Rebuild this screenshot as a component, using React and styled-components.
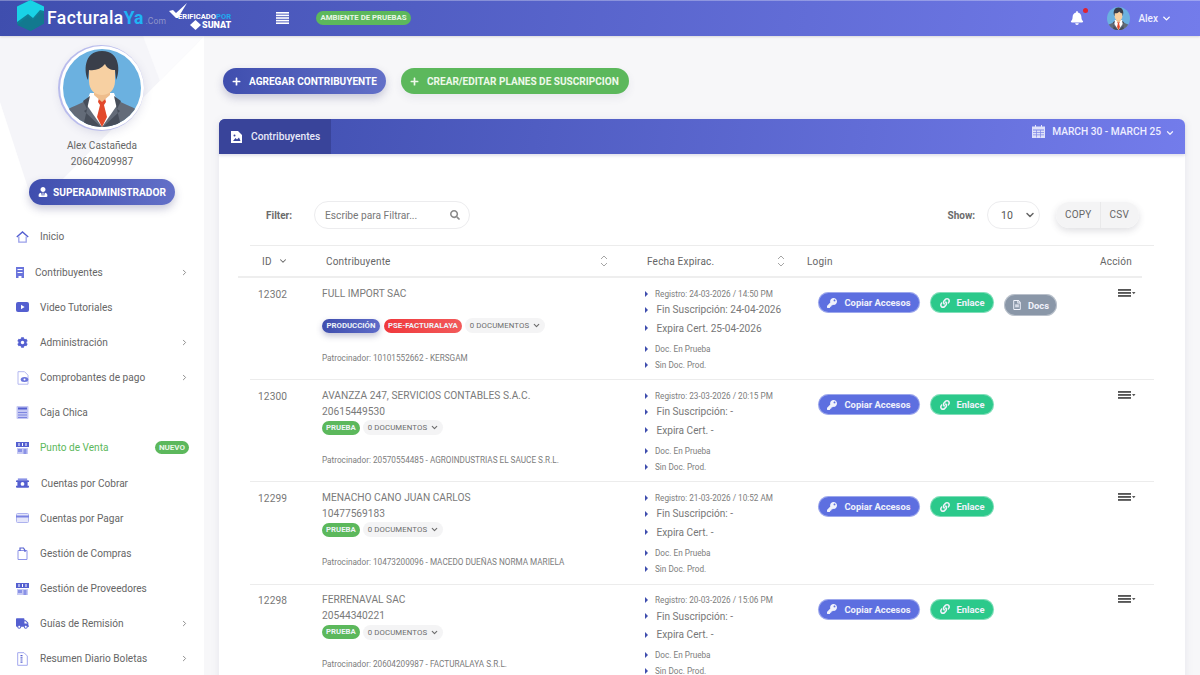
import React from 'react';
import styled, { createGlobalStyle } from 'styled-components';
import { FaBell, FaCog, FaKey, FaLink, FaPlus, FaRegFileAlt, FaSearch, FaTruck, FaUserTie } from 'react-icons/fa';
import { FiChevronDown, FiChevronRight } from 'react-icons/fi';

const GlobalStyle = createGlobalStyle`
  html, body {
    margin: 0;
    height: 100%;
    overflow: hidden;
    background: #f7f7f9;
    font-family: Roboto, "Liberation Sans", sans-serif;
    color: #6f6f6f;
  }
`;

const gradient = 'linear-gradient(100deg, #3f4eae 0%, #737ceb 100%)';

const Page = styled.div`
  width: 1200px;
  height: 675px;
  overflow: hidden;
  display: flex;
  flex-direction: column;
`;

const TopBar = styled.header`
  height: 36px;
  flex: none;
  display: flex;
  align-items: center;
  background: ${gradient};
  box-shadow: inset 0 1px 0 rgba(255, 255, 255, .3), 0 1px 2px rgba(0, 0, 0, .12);
  color: #fff;
  position: relative;
  z-index: 2;
`;

const LogoBox = styled.div`
  display: flex;
  align-items: center;
  margin-left: 17px;
  width: 152px;
  flex: none;
`;

const LogoText = styled.span`
  font-size: 17.5px;
  font-weight: 500;
  margin-left: 3px;
  letter-spacing: .45px;
  white-space: nowrap;
  b { font-weight: 700; color: #1fb4f5; letter-spacing: 0; }
  small { font-size: 8.5px; font-weight: 400; color: #8f95c9; letter-spacing: .2px; margin-left: 2px; }
`;

const Verified = styled.div`
  position: relative;
  width: 62px;
  height: 32px;
  flex: none;
  margin-right: 45px;
  line-height: 1;
`;

const VerifiedCheck = styled.svg`
  position: absolute;
  left: 0;
  top: 1px;
`;

const VerifiedLine = styled.span`
  position: absolute;
  left: 9px;
  top: 11px;
  font-size: 7.6px;
  font-weight: 700;
  white-space: nowrap;
  b { color: #22a9ee; font-weight: 700; }
`;

const SunatLine = styled.span`
  position: absolute;
  left: 21px;
  top: 18px;
  font-size: 9px;
  font-weight: 900;
  display: flex;
  align-items: center;
  gap: 1px;
`;

const EnvBadge = styled.span`
  margin-left: 27px;
  width: 95px;
  height: 14px;
  border-radius: 7px;
  background: #5cb85c;
  font-size: 7.8px;
  font-weight: 700;
  line-height: 14px;
  text-align: center;
  color: #e8f6e6;
`;

const TopRight = styled.div`
  margin-left: auto;
  display: flex;
  align-items: center;
  padding-right: 28px;
`;

const BellBox = styled.span`
  position: relative;
  display: flex;
  font-size: 14px;
  margin-right: 23px;
  &::after {
    content: '';
    position: absolute;
    top: -3px;
    right: -4px;
    width: 5px;
    height: 5px;
    border-radius: 50%;
    background: #e0212f;
  }
`;

const TopUser = styled.span`
  font-size: 10px;
  font-weight: 500;
  margin-left: 8px;
  margin-right: 3px;
  color: #eef;
`;

const Body = styled.div`
  flex: 1;
  display: flex;
  min-height: 0;
`;

const Sidebar = styled.aside`
  width: 204px;
  flex: none;
  background: #fff;
  position: relative;
  overflow: hidden;
  display: flex;
  flex-direction: column;
  align-items: center;
  padding-top: 10px;
  box-sizing: border-box;
`;

const SideDecor = styled.svg`
  position: absolute;
  left: 0;
  top: 0;
`;

const AvatarRing = styled.div`
  position: relative;
  flex: none;
  width: 84px;
  height: 84px;
  border-radius: 50%;
  padding: 3px;
  box-sizing: border-box;
  background: #fff;
  box-shadow: -1px 0 0 1px #b9bcec, 0 3px 10px rgba(90, 90, 140, .16);
`;

const UserName = styled.div`
  position: relative;
  flex: none;
  margin-top: ${p => p.$mt}px;
  font-size: 10.1px;
  line-height: 16px;
  color: #666;
`;

const UserRole = styled.button`
  position: relative;
  flex: none;
  margin-top: 9px;
  width: 146px;
  height: 26px;
  border: 0;
  border-radius: 13px;
  background: linear-gradient(90deg, #3f4eae, #6370c8);
  box-shadow: 0 4px 8px rgba(60, 60, 120, .28);
  color: #fff;
  font: 700 10.15px Roboto, sans-serif;
  display: flex;
  align-items: center;
  justify-content: center;
  gap: 5px;
`;

const Menu = styled.nav`
  width: 100%;
  flex: none;
  margin-top: 14.4px;
  position: relative;
`;

const MenuItem = styled.div`
  height: 35.17px;
  display: flex;
  align-items: center;
  padding-left: 16px;
  padding-right: 15px;
  font-size: 10.1px;
  color: ${p => (p.$green ? '#5cb85c' : '#666')};
`;

const MenuIcon = styled.span`
  width: 13px;
  flex: none;
  display: flex;
  justify-content: ${p => (p.$start ? 'flex-start' : 'center')};
  color: #545fd0;
  font-size: 13px;
`;

const MenuLabel = styled.span`
  margin-left: ${p => p.$indent}px;
  white-space: nowrap;
`;

const MenuArrow = styled(FiChevronRight)`
  margin-left: auto;
  font-size: 9px;
  stroke-width: 2.5;
  color: #888;
`;

const NewBadge = styled.span`
  margin-left: auto;
  width: 34px;
  height: 13px;
  border-radius: 7px;
  background: #5cb85c;
  color: #eaf7e8;
  font-size: 8px;
  font-weight: 700;
  line-height: 13px;
  text-align: center;
`;

const Main = styled.main`
  flex: 1;
  min-width: 0;
  padding: 32px 15px 0;
`;

const ActionBar = styled.div`
  display: flex;
  gap: 15px;
  padding-left: 4px;
`;

const AddButton = styled.button`
  height: 26px;
  width: ${p => p.$w}px;
  border: 0;
  border-radius: 13px;
  background: ${p => (p.$green ? '#5cb85c' : 'linear-gradient(90deg, #3f4eae, #6370c8)')};
  box-shadow: 0 4px 8px rgba(60, 60, 120, ${p => (p.$green ? '.08' : '.25')});
  color: ${p => (p.$green ? '#eef8ea' : '#fff')};
  font: 700 10.05px Roboto, sans-serif;
  display: flex;
  align-items: center;
  gap: 8px;
  padding: 0 0 0 9px;
  white-space: nowrap;
`;

const Card = styled.section`
  margin-top: 25px;
  width: 966px;
  height: 600px;
  background: #fff;
  border-radius: 6px 6px 0 0;
  box-shadow: 0 1px 8px rgba(80, 80, 120, .1);
`;

const CardHead = styled.div`
  height: 35px;
  display: flex;
  justify-content: space-between;
  background: ${gradient};
  border-radius: 6px 6px 0 0;
  color: #fff;
  box-shadow: 0 2px 3px rgba(60, 60, 120, .15);
`;

const CardTab = styled.div`
  width: 112px;
  display: flex;
  align-items: center;
  gap: 9px;
  padding-left: 12px;
  box-sizing: border-box;
  background: #39449a;
  border-radius: 6px 0 0 0;
  font-size: 10.2px;
  font-weight: 500;
  color: #e8e9f8;
`;

const DateRange = styled.div`
  display: flex;
  align-items: flex-start;
  padding: 6px 10px 0 0;
  gap: 7px;
  font-size: 10.2px;
  font-weight: 500;
  line-height: 14px;
  color: #eef;
`;

const DateChevron = styled(FiChevronDown)`
  margin: 3px 0 0 -3px;
  stroke-width: 3;
`;

const CardBody = styled.div`
  padding: 47px 31px 0;
`;

const FilterRow = styled.div`
  display: flex;
  align-items: center;
  height: 28px;
  padding: 0 15px 0 16px;
  margin-bottom: 16px;
`;

const FieldLabel = styled.span`
  font-size: 10px;
  font-weight: 700;
  color: #6b6b6b;
  margin-right: ${p => p.$gap}px;
`;

const SearchBox = styled.div`
  width: 156px;
  height: 28px;
  box-sizing: border-box;
  border: 1px solid #ececee;
  border-radius: 14px;
  display: flex;
  align-items: center;
  justify-content: space-between;
  padding: 0 9px 0 10px;
  font-size: 10.2px;
  color: #777;
`;

const ShowSelect = styled.div`
  margin-left: auto;
  display: flex;
  align-items: center;
`;

const SelectBox = styled.div`
  width: 53px;
  height: 28px;
  box-sizing: border-box;
  border: 1px solid #ececee;
  border-radius: 14px;
  display: flex;
  align-items: center;
  justify-content: space-between;
  padding: 0 3px 0 13px;
  font-size: 10.5px;
  color: #555;
`;

const ExportGroup = styled.div`
  margin-left: 16px;
  display: flex;
  height: 26px;
  border-radius: 13px;
  overflow: hidden;
  box-shadow: 0 3px 7px rgba(60, 60, 80, .16);
`;

const ExportButton = styled.span`
  background: #f4f4f5;
  padding: 0 ${p => p.$pr}px 0 ${p => p.$pl}px;
  font-size: 10px;
  line-height: 25px;
  letter-spacing: .2px;
  color: #666;
  & + & { border-left: 1px solid #e9e9ea; }
`;

const TableHead = styled.div`
  border-top: 1px solid #ececec;
`;

const HeadRow = styled.div`
  width: 904px;
  height: 32px;
  margin-left: -12px;
  box-sizing: border-box;
  border-bottom: 2px solid #eeeeee;
  display: grid;
  grid-template-columns: 88px 321px 160px 293px 42px;
  align-items: center;
  font-size: 10px;
  letter-spacing: .2px;
  color: #666;
`;

const HeadCell = styled.div`
  display: flex;
  align-items: center;
  justify-content: space-between;
  padding-left: ${p => p.$pl || 0}px;
  padding-right: ${p => p.$pr || 0}px;
`;

const Row = styled.div`
  height: 102.2px;
  box-sizing: border-box;
  border-bottom: 1px solid #ececec;
  display: grid;
  grid-template-columns: 72px 321px 175px 300px 36px;
  padding-top: 7.5px;
  overflow: hidden;
`;

const IdCell = styled.div`
  padding-left: 8px;
  font-size: 10.2px;
  line-height: 17px;
  letter-spacing: .1px;
  color: #777;
`;

const TextLine = styled.div`
  height: 16px;
  font-size: 10.2px;
  line-height: 16px;
  color: #7a7a7a;
  white-space: nowrap;
`;

const BadgeRow = styled.div`
  display: flex;
  align-items: center;
  gap: 3px;
  height: 16px;
`;

const StateBadge = styled.span`
  height: 14px;
  padding: 0 ${p => p.$pad || 4}px;
  margin-right: ${p => p.$mr || 0}px;
  border-radius: 7px;
  background: ${p => p.$bg};
  box-shadow: ${p => (p.$raised ? '0 3px 6px rgba(60, 60, 120, .3)' : 'none')};
  color: #eef3f8;
  font-size: 7.8px;
  font-weight: 700;
  line-height: 14px;
`;

const DocsChip = styled.span`
  height: 15px;
  width: 80px;
  box-sizing: border-box;
  padding-left: 5px;
  border-radius: 8px;
  background: #f4f4f5;
  color: #6c6c6c;
  font-size: 7.8px;
  letter-spacing: .1px;
  display: flex;
  align-items: center;
  gap: 3px;
  svg { stroke-width: 3; }
`;

const Sponsor = styled.div`
  margin-top: 16px;
  font-size: 8.2px;
  line-height: 16px;
  color: #7d7d7d;
  white-space: nowrap;
`;

const DateLine = styled.div`
  height: ${p => p.$h}px;
  display: flex;
  align-items: center;
  font-size: ${p => (p.$big ? '10.1px' : '8.2px')};
  color: ${p => (p.$big ? '#777' : '#7d7d7d')};
  white-space: nowrap;
  &::before {
    content: '';
    width: 0;
    height: 0;
    margin-right: ${p => (p.$big ? '8.5px' : '7px')};
    margin-left: 2px;
    border-left: 3px solid #3f4eae;
    border-top: 3px solid transparent;
    border-bottom: 3px solid transparent;
  }
`;

const LoginCell = styled.div`
  display: flex;
  gap: 10px;
  align-items: flex-start;
  padding-top: 6.5px;
`;

const PillButton = styled.span`
  height: ${p => p.$h || 21}px;
  width: ${p => p.$w}px;
  margin-top: ${p => p.$mt || 0}px;
  border-radius: 11px;
  background: ${p => p.$bg};
  box-shadow: 0 0 0 1px rgba(255, 255, 255, .4) inset;
  color: #f0f2fb;
  font-size: 9.4px;
  font-weight: 700;
  display: flex;
  align-items: center;
  justify-content: center;
  gap: ${p => p.$gap || 6}px;
`;

const ActionCell = styled.div`
  padding-top: 3px;
  display: flex;
  color: #555;
`;

/* dibujos */
const Avatar = ({ size }) => (
  <svg width={size} height={size} viewBox="0 0 78 78" style={{ display: 'block' }}>
    <defs>
      <clipPath id={`circle-${size}`}><circle cx="39" cy="39" r="39" /></clipPath>
    </defs>
    <g clipPath={`url(#circle-${size})`}>
      <rect width="78" height="78" fill="#6bb1e0" />
      <path d="M2 62c8-5 17-8 25-12h24c8 4 17 7 25 12v16H2z" fill="#636b78" />
      <path d="M27 44h24l4 11-16 23-16-23z" fill="#fff" />
      <path d="M27 47l-7 5 4 8-3 2 17 16H20zM51 47l7 5-4 8 3 2-17 16h18z" fill="#474e5a" />
      <path d="M36 49h6l1 4-2 3 3 12-5 10-5-10 3-12-2-3z" fill="#e2492b" />
      <path d="M31 36h16v10l-8 7-8-7z" fill="#eebd8c" />
      <path d="M26 16c0-8 6-12 13-12s13 4 13 12v16c0 9-6 14-13 14s-13-5-13-14z" fill="#f7d0a2" />
      <path d="M25 31c-4-7-5-29 14-29s18 22 14 29l-1-10c-5 0-8-2-10-6-4 5-10 7-16 6z" fill="#3a3f4a" />
    </g>
  </svg>
);

const BarsIcon = ({ lines, w, h, caret }) => (
  <svg width={caret ? w + 5 : w} height={h} viewBox={`0 0 ${caret ? w + 5 : w} ${h}`}>
    {Array.from({ length: lines }, (_, i) => (
      <rect key={i} x="0" y={(i * h) / lines} width={w} height={(h / lines) * 0.62} fill="currentColor" />
    ))}
    {caret && <path d={`M${w + 1} 3h3.500l-1.750 2.200z`} fill="currentColor" />}
  </svg>
);

const SortIcon = () => (
  <svg width="8" height="12" viewBox="0 0 8 12" fill="none" stroke="#a5a5a5" strokeWidth="1">
    <path d="M1 4l3-3 3 3M1 8l3 3 3-3" />
  </svg>
);

const c1 = '#545fd0';
const c2 = '#c5c8f3';

const HomeIcon = () => (
  <svg width="13" height="12" viewBox="0 0 14 13" fill="none">
    <path d="M.8 6.500L7 1l6.200 5.500" stroke={c1} strokeWidth="1.500" />
    <path d="M3 6v6h8V6" stroke="#9aa0ea" strokeWidth="1.400" />
  </svg>
);
const BuildingIcon = () => (
  <svg width="8" height="11" viewBox="0 0 8 11">
    <path d="M0 0h8v11H5.500V9h-3v2H0z" fill="#6a74dc" />
    <path d="M1.500 2h5v1h-5zM1.500 5h5v1h-5z" fill="#fff" />
  </svg>
);
const VideoIcon = () => (
  <svg width="13" height="10" viewBox="0 0 13 10">
    <rect width="13" height="10" rx="2" fill={c1} />
    <path d="M5 2.800l3.600 2.200L5 7.200z" fill="#fff" />
  </svg>
);
const DocEyeIcon = () => (
  <svg width="12" height="14" viewBox="0 0 12 14" fill="none">
    <path d="M1 .7h6.500l3.500 3.500v9H1z" fill="#fff" stroke="#b4b8f0" />
    <ellipse cx="7.500" cy="8.500" rx="3.800" ry="2.500" fill="#6a74dc" />
    <circle cx="7.500" cy="8.500" r="1" fill="#fff" />
  </svg>
);
const CalcIcon = () => (
  <svg width="13" height="13" viewBox="0 0 12 13">
    <rect width="12" height="13" rx="1" fill={c2} />
    <rect x="1.500" y="1.500" width="9" height="2" fill={c1} />
    <path d="M1.500 6h9v1h-9zM1.500 8.500h9v1h-9zM1.500 11h9v1h-9z" fill="#7d85e0" />
  </svg>
);
const StoreIcon = () => (
  <svg width="13" height="12" viewBox="0 0 13 12">
    <path d="M0 0h13v5H0z" fill={c1} />
    <path d="M2.500 1h1v3h-1zM6 1h1v3H6zM9.500 1h1v3h-1z" fill="#fff" />
    <path d="M1 6h11v6H1z" fill={c2} />
    <path d="M7.500 7h3v5h-3zM2 7h4v3H2z" fill="#8a92e6" />
  </svg>
);
const MoneyIcon = () => (
  <svg width="13" height="11" viewBox="0 0 14 11">
    <path d="M2 0h10v2H2z" fill="#8a92e6" />
    <rect y="2" width="14" height="8" rx="1" fill={c1} />
    <circle cx="7" cy="6" r="2" fill="#fff" />
    <path d="M0 4h1.500v4H0zM14 4h-1.500v4H14z" fill="#fff" />
  </svg>
);
const CardIcon = () => (
  <svg width="13" height="10" viewBox="0 0 13 10" fill="none">
    <rect x=".5" y=".5" width="12" height="9" rx="1" fill={c2} fillOpacity=".45" stroke="#adb2ee" />
    <rect x="0" y="2.500" width="13" height="2" fill="#7b83e2" />
  </svg>
);
const BagIcon = () => (
  <svg width="11" height="13" viewBox="0 0 11 13" fill="none">
    <path d="M1 3.500h9v9H1z" fill="#fff" stroke="#8e94e8" />
    <path d="M3 4V1h3.500L8 3.500V5" stroke={c1} strokeWidth="1.200" />
  </svg>
);
const ReceiptIcon = () => (
  <svg width="11" height="14" viewBox="0 0 11 14" fill="none">
    <path d="M.7.700h6.300l3.300 3.300v9.300H.7z" fill="#fff" stroke="#a3a8ee" />
    <path d="M4.500 3v8" stroke={c1} strokeWidth="2" strokeDasharray="1 .8" />
  </svg>
);

const menuItems = [
  { label: 'Inicio', icon: <HomeIcon />, indent: 11 },
  { label: 'Contribuyentes', icon: <BuildingIcon />, indent: 6, more: true, start: true },
  { label: 'Video Tutoriales', icon: <VideoIcon />, indent: 11 },
  { label: 'Administración', icon: <FaCog size={11} />, indent: 11, more: true },
  { label: 'Comprobantes de pago', icon: <DocEyeIcon />, indent: 11, more: true },
  { label: 'Caja Chica', icon: <CalcIcon />, indent: 11 },
  { label: 'Punto de Venta', icon: <StoreIcon />, indent: 11, green: true, badge: 'NUEVO' },
  { label: 'Cuentas por Cobrar', icon: <MoneyIcon />, indent: 12 },
  { label: 'Cuentas por Pagar', icon: <CardIcon />, indent: 11 },
  { label: 'Gestión de Compras', icon: <BagIcon />, indent: 11 },
  { label: 'Gestión de Proveedores', icon: <StoreIcon />, indent: 11 },
  { label: 'Guías de Remisión', icon: <FaTruck />, indent: 11, more: true },
  { label: 'Resumen Diario Boletas', icon: <ReceiptIcon />, indent: 11, more: true },
];

const rows = [
  {
    id: '12302',
    name: 'FULL IMPORT SAC',
    ruc: '',
    prod: true,
    sponsor: '10101552662 - KERSGAM',
    reg: '24-03-2026 / 14:50 PM',
    fin: '24-04-2026',
    cert: ' 25-04-2026',
    docs: true,
  },
  {
    id: '12300',
    name: 'AVANZZA 247, SERVICIOS CONTABLES S.A.C.',
    ruc: '20615449530',
    sponsor: '20570554485 - AGROINDUSTRIAS EL SAUCE S.R.L.',
    reg: '23-03-2026 / 20:15 PM',
    fin: '-',
    cert: ' -',
  },
  {
    id: '12299',
    name: 'MENACHO CANO JUAN CARLOS',
    ruc: '10477569183',
    sponsor: '10473200096 - MACEDO DUEÑAS NORMA MARIELA',
    reg: '21-03-2026 / 10:52 AM',
    fin: '-',
    cert: ' -',
  },
  {
    id: '12298',
    name: 'FERRENAVAL SAC',
    ruc: '20544340221',
    sponsor: '20604209987 - FACTURALAYA S.R.L.',
    reg: '20-03-2026 / 15:06 PM',
    fin: '-',
    cert: ' -',
  },
];

const App = () => (
  <Page>
    <GlobalStyle />
    <TopBar>
      <LogoBox>
        <svg width="27" height="31" viewBox="0 0 27 31" style={{ marginTop: -5 }}>
          <path d="M13.500 0L27 6.500v17L13.500 31 0 23.500v-17z" fill="#0f8096" />
          <path d="M13.500 0L27 6.500V11l-4-1-7 8-5-4-11 8V6.500z" fill="#19d2e6" />
          <path d="M0 25l11-8.500 5 4 7-8 4 1.500V23.500L13.500 31z" fill="#12798f" />
        </svg>
        <LogoText>Facturala<b>Ya</b><small>.Com</small></LogoText>
      </LogoBox>
      <Verified>
        <VerifiedCheck width="19" height="16" viewBox="0 0 19 16">
          <path d="M0 8l4-1 3 3L18 0l-9 15h-2z" fill="#fff" />
        </VerifiedCheck>
        <VerifiedLine>ERIFICADO<b>POR</b></VerifiedLine>
        <SunatLine>
          <svg width="11" height="10" viewBox="0 0 11 10"><path d="M5.500 0L11 5 5.500 10 0 5z" fill="#fff" /></svg>
          SUNAT
        </SunatLine>
      </Verified>
      <BarsIcon lines={5} w={13} h={13} />
      <EnvBadge>AMBIENTE DE PRUEBAS</EnvBadge>
      <TopRight>
        <BellBox><FaBell /></BellBox>
        <Avatar size={23} />
        <TopUser>Alex</TopUser>
        <FiChevronDown size={11} strokeWidth={3} />
      </TopRight>
    </TopBar>
    <Body>
      <Sidebar>
        <SideDecor width="204" height="200" viewBox="0 0 204 200">
          <path d="M0 0H204L50 156q-14 12-22-4L0 66z" fill="#f5f5f9" />
          <path d="M143 0H204L160 45z" fill="#fbfbfd" />
        </SideDecor>
        <AvatarRing><Avatar size={78} /></AvatarRing>
        <UserName $mt={8}>Alex Castañeda</UserName>
        <UserName $mt={0}>20604209987</UserName>
        <UserRole><FaUserTie size={10} />SUPERADMINISTRADOR</UserRole>
        <Menu>
          {menuItems.map(item => (
            <MenuItem key={item.label} $green={item.green}>
              <MenuIcon $start={item.start}>{item.icon}</MenuIcon>
              <MenuLabel $indent={item.indent}>{item.label}</MenuLabel>
              {item.more && <MenuArrow />}
              {item.badge && <NewBadge>{item.badge}</NewBadge>}
            </MenuItem>
          ))}
        </Menu>
      </Sidebar>
      <Main>
        <ActionBar>
          <AddButton $w={163}><FaPlus size={9} />AGREGAR CONTRIBUYENTE</AddButton>
          <AddButton $w={228} $green><FaPlus size={9} />CREAR/EDITAR PLANES DE SUSCRIPCION</AddButton>
        </ActionBar>
        <Card>
          <CardHead>
            <CardTab>
              <svg width="11" height="12" viewBox="0 0 11 12">
                <path d="M0 0h7l4 4v8H0z" fill="#fff" />
                <path d="M2 10l2.500-3 1.500 1.500L8 6.500 9.500 10z" fill="#39449a" />
                <circle cx="3.500" cy="4.500" r="1" fill="#39449a" />
              </svg>
              Contribuyentes
            </CardTab>
            <DateRange>
              <svg width="13" height="13" viewBox="0 0 13 13">
                <path d="M0 1.500h3V0h1v1.500h5V0h1v1.500h3V13H0z" fill="#dfe1fa" />
                <path d="M1 4.500h11v1H1zM1 7h11v.7H1zM1 9.500h11v.7H1zM4 4.500h.7v8H4zM8 4.500h.7v8H8z" fill="#7f87e6" />
              </svg>
              MARCH 30 - MARCH 25
              <DateChevron size={10} />
            </DateRange>
          </CardHead>
          <CardBody>
            <FilterRow>
              <FieldLabel $gap={22}>Filter:</FieldLabel>
              <SearchBox>Escribe para Filtrar...<FaSearch size={10} color="#8a8a8a" /></SearchBox>
              <ShowSelect>
                <FieldLabel $gap={12}>Show:</FieldLabel>
                <SelectBox>10<FiChevronDown size={12} strokeWidth={3} color="#666" /></SelectBox>
              </ShowSelect>
              <ExportGroup>
                <ExportButton $pl={9} $pr={8}>COPY</ExportButton>
                <ExportButton $pl={9} $pr={10}>CSV</ExportButton>
              </ExportGroup>
            </FilterRow>
            <TableHead>
              <HeadRow>
                <HeadCell $pl={24} $pr={38}>ID <FiChevronDown size={10} strokeWidth={2.5} /></HeadCell>
                <HeadCell $pr={39}>Contribuyente <SortIcon /></HeadCell>
                <HeadCell $pr={22}>Fecha Expirac. <SortIcon /></HeadCell>
                <HeadCell>Login</HeadCell>
                <HeadCell>Acción</HeadCell>
              </HeadRow>
            </TableHead>
            {rows.map(row => (
              <Row key={row.id}>
                <IdCell>{row.id}</IdCell>
                <div>
                  <TextLine>{row.name}</TextLine>
                  <TextLine>{row.ruc}</TextLine>
                  <BadgeRow>
                    {row.prod ? (
                      <>
                        <StateBadge $bg="linear-gradient(90deg, #3f4eae, #5e6bc8)" $pad={4.5} $mr={1} $raised>PRODUCCIÓN</StateBadge>
                        <StateBadge $bg="linear-gradient(90deg, #f0383c, #f25a5a)">PSE-FACTURALAYA</StateBadge>
                      </>
                    ) : (
                      <StateBadge $bg="#5cb85c" $pad={4}>PRUEBA</StateBadge>
                    )}
                    <DocsChip>0 DOCUMENTOS <FiChevronDown size={9} /></DocsChip>
                  </BadgeRow>
                  <Sponsor>Patrocinador: {row.sponsor}</Sponsor>
                </div>
                <div>
                  <DateLine $h={16}>Registro: {row.reg}</DateLine>
                  <DateLine $h={16} $big>Fin Suscripción: {row.fin}</DateLine>
                  <DateLine $h={21} $big>Expira Cert.{row.cert}</DateLine>
                  <DateLine $h={20}>Doc. En Prueba</DateLine>
                  <DateLine $h={12}>Sin Doc. Prod.</DateLine>
                </div>
                <LoginCell>
                  <PillButton $w={102} $gap={7} $bg="#5d6fe0"><FaKey size={10} />Copiar Accesos</PillButton>
                  <PillButton $w={64} $gap={7} $bg="#2cc98b"><FaLink size={10} />Enlace</PillButton>
                  {row.docs && (
                    <PillButton $w={53} $h={22} $mt={2} $bg="#8a97a8"><FaRegFileAlt size={10} />Docs</PillButton>
                  )}
                </LoginCell>
                <ActionCell>
                  <BarsIcon lines={3} w={13} h={9} caret />
                </ActionCell>
              </Row>
            ))}
          </CardBody>
        </Card>
      </Main>
    </Body>
  </Page>
);

export default App;
